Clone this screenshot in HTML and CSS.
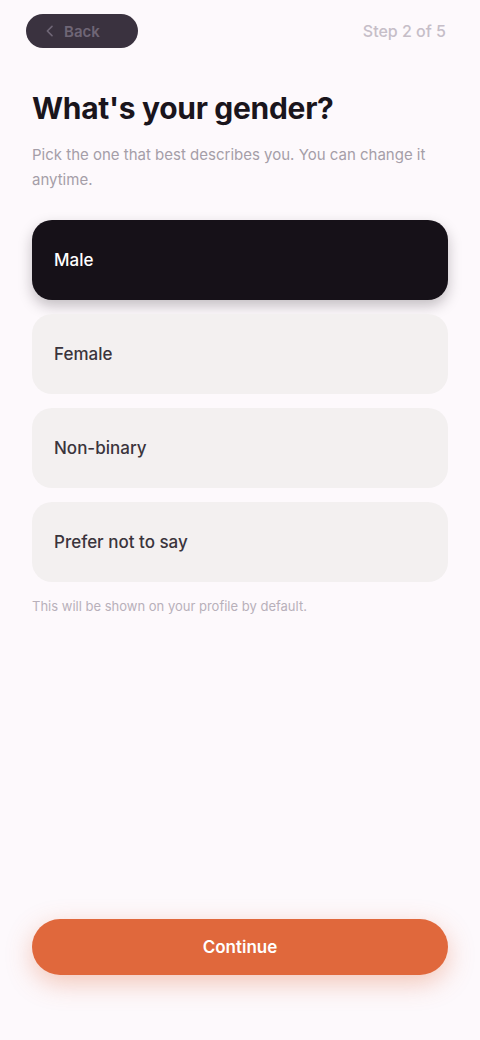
FILE: index.html
```html
<!DOCTYPE html>
<html lang="en">
<head>
<meta charset="utf-8">
<title>Gender</title>
<link rel="stylesheet" href="styles.css">
</head>
<body>
<div class="screen">
  <header class="topbar">
    <button class="back">
      <svg class="back-icon" viewBox="0 0 24 24" width="16" height="16"><path d="M15 5l-7 7 7 7" fill="none" stroke="currentColor" stroke-width="2.4" stroke-linecap="round" stroke-linejoin="round"/></svg>
      <span>Back</span>
    </button>
    <span class="step">Step 2 of 5</span>
  </header>

  <h1 class="title">What's your gender?</h1>
  <p class="subtitle">Pick the one that best describes you. You can change it anytime.</p>

  <div class="options">
    <div class="option selected">Male</div>
    <div class="option">Female</div>
    <div class="option">Non-binary</div>
    <div class="option">Prefer not to say</div>
  </div>
  <p class="note">This will be shown on your profile by default.</p>

  <button class="continue">Continue</button>
</div>
</body>
</html>
```

FILE: styles.css
```css
* { box-sizing: border-box; }
html, body { margin: 0; padding: 0; }
body {
  background: #fdf9fc;
  font-family: "Inter", "Liberation Sans", sans-serif;
  color: #1a151c;
}
.screen {
  height: 1040px;
  display: flex;
  flex-direction: column;
  padding: 14px 32px 65px;
}
.topbar {
  display: flex;
  align-items: center;
  justify-content: space-between;
  height: 34px;
}
.back {
  display: flex;
  align-items: center;
  gap: 6px;
  height: 34px;
  width: 112px;
  padding: 0 16px;
  margin-left: -6px;
  border: none;
  border-radius: 17px;
  background: #3a323f;
  color: #6f6676;
  font-family: inherit;
  font-size: 15px;
  font-weight: 600;
}
.back-icon { flex: none; }
.step {
  font-size: 16px;
  color: #c6bec8;
  font-weight: 500;
  margin-right: 2px;
}
.title {
  margin: 42px 0 0;
  font-size: 30px;
  font-weight: 700;
  letter-spacing: -0.3px;
  line-height: 36px;
  color: #1a151c;
}
.subtitle {
  margin: 16px 0 0;
  font-size: 15px;
  line-height: 25px;
  color: #a59ea8;
  padding-right: 10px;
}
.options {
  margin-top: 28px;
  display: flex;
  flex-direction: column;
  gap: 14px;
}
.option {
  height: 80px;
  display: flex;
  align-items: center;
  padding: 0 22px;
  border-radius: 20px;
  background: #f3f0f0;
  font-size: 17px;
  font-weight: 500;
  color: #3a343c;
}
.option.selected {
  background: #161118;
  color: #ffffff;
  box-shadow: 0 6px 14px rgba(22, 17, 24, 0.25);
}
.note {
  margin: 16px 0 0;
  font-size: 13px;
  color: #b8b0ba;
}
.continue {
  margin-top: auto;
  height: 56px;
  border: none;
  border-radius: 28px;
  background: #e0683c;
  color: #ffffff;
  font-family: inherit;
  font-size: 17px;
  font-weight: 600;
  box-shadow: 0 8px 26px rgba(224, 104, 60, 0.35);
}
```
